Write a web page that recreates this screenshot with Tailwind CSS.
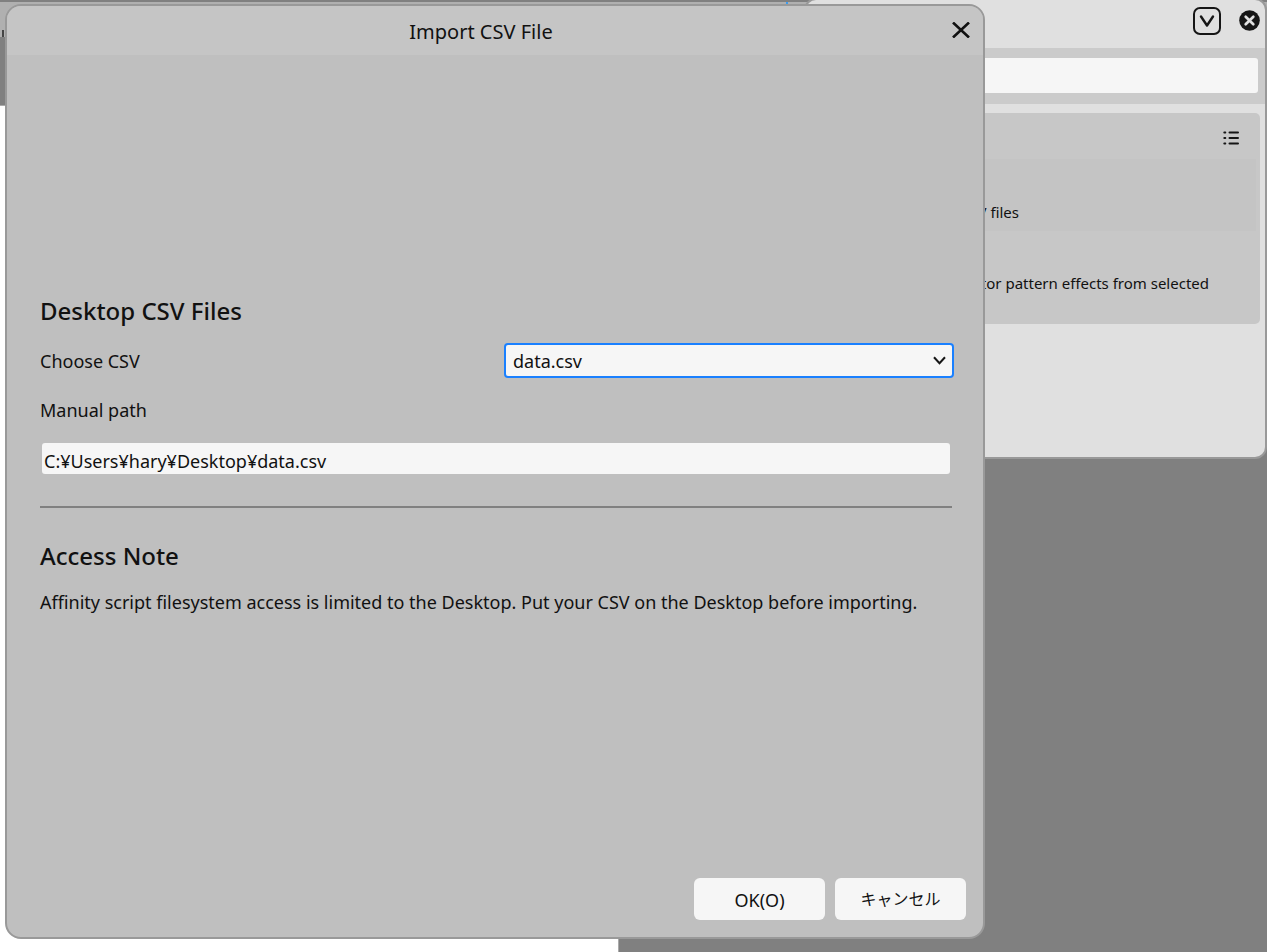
<!DOCTYPE html>
<html lang="en">
<head>
    <meta charset="UTF-8">
    <meta name="viewport" content="width=device-width, initial-scale=1.0">
    <title>Import CSV File</title>
    <script src="https://cdn.jsdelivr.net/npm/@tailwindcss/browser@4"></script>
</head>
<body class="relative h-screen overflow-hidden bg-[#808080] font-['Noto_Sans','Noto_Sans_CJK_JP',sans-serif] text-[#111]">

    <!-- App window behind the dialog -->
    <div class="flex h-full flex-col pt-[2px]">
        <div class="flex h-[35px] items-end bg-[#b0b0b0] pl-[2px]">
            <div class="h-[7px] w-[2px] bg-[#444]"></div>
        </div>
        <div class="h-[68px]"></div>
        <div class="w-[619px] flex-1 border-t border-r border-[#aaa] bg-white"></div>
    </div>
    <div class="absolute top-[2px] left-[786px] size-[2px] bg-[#3b9cf0]"></div>

    <!-- Scripts panel -->
    <aside class="absolute top-[-2px] right-0 left-[804px] flex h-[461px] flex-col rounded-xl border-2 border-[#999] bg-[#e0e0e0]">
        <div class="flex h-12 items-center justify-end gap-[18px] pr-[5px] pb-[7px]">
            <button type="button" aria-label="Collapse panel">
                <svg class="size-7" viewBox="0 0 28 28" fill="none" stroke="#161616" stroke-width="2">
                    <rect x="1" y="1" width="26" height="26" rx="6" />
                    <path d="M8 9.5l6 9 6-9" stroke-width="2.4" stroke-linecap="round" stroke-linejoin="round" />
                </svg>
            </button>
            <button type="button" aria-label="Close panel">
                <svg class="size-[21px]" viewBox="0 0 22 22">
                    <circle cx="11" cy="11" r="10.8" fill="#161616" />
                    <path d="M7 7l8 8M15 7l-8 8" stroke="#e0e0e0" stroke-width="2.8" stroke-linecap="round" />
                </svg>
            </button>
        </div>
        <div class="bg-[#cbcbcb] pt-[10px] pr-[7px] pb-[11px] pl-2">
            <input type="text" aria-label="Search scripts" class="block h-[35px] w-full rounded-[3px] bg-[#f6f6f6] px-2">
        </div>
        <div class="mt-[9px] mr-[5px] ml-2 rounded-[5px] bg-[#c7c7c7] pb-[22px] text-[15px] leading-5">
            <div class="flex h-[46px] items-center justify-end pt-1 pr-[21px]">
                <button type="button" aria-label="List view">
                    <svg class="h-[14px] w-4" viewBox="0 0 16 14" fill="none" stroke="#161616" stroke-width="2" stroke-linecap="round">
                        <path d="M1.3 1.5h1M6.5 1.5h8.5M1.3 7h1M6.5 7h8.5M1.3 12.5h1M6.5 12.5h8.5" />
                    </svg>
                </button>
            </div>
            <div class="mr-1 flex h-[72px] items-end justify-end bg-[#c4c4c4] pr-[237px] pb-[9px]">
                <p class="whitespace-nowrap">CSV files</p>
            </div>
            <div class="mr-1 flex h-[71px] items-end justify-end pr-[47px] pb-[9px]">
                <p class="whitespace-nowrap">vector pattern effects from selected</p>
            </div>
        </div>
    </aside>

    <!-- Import dialog -->
    <form role="dialog" aria-labelledby="dialogTitle" class="absolute top-1 right-[282px] bottom-[13px] left-[5px] flex flex-col overflow-hidden rounded-2xl border-2 border-[#999] bg-[#bfbfbf]">
        <header class="relative flex h-[49px] items-center justify-center bg-[#c5c5c5]">
            <h1 id="dialogTitle" class="pr-7 pt-[2px] text-[20px] leading-7">Import CSV File</h1>
            <button type="button" aria-label="Close" class="absolute top-4 right-[13px]">
                <svg class="h-4 w-[18px]" viewBox="0 0 18 16" fill="none" stroke="#111" stroke-width="2.6">
                    <path d="M1 .5l16 15M17 .5L1 15.5" />
                </svg>
            </button>
        </header>

        <div class="flex flex-1 flex-col justify-center pr-[29px] pb-[22px] pl-[33px] text-[18px] leading-7">
            <h2 class="text-[24px] leading-8 font-medium">Desktop CSV Files</h2>
            <div class="mt-4 flex items-center">
                <label for="csvSelect" class="flex-1">Choose CSV</label>
                <div class="relative w-[450px]">
                    <select id="csvSelect" class="block h-[35px] w-full appearance-none rounded-sm border-2 border-[#1a80ff] bg-[#f6f6f6] px-[7px] outline-none">
                        <option>data.csv</option>
                    </select>
                    <svg class="pointer-events-none absolute top-[13px] right-2 h-[9px] w-[13px]" viewBox="0 0 13 9" fill="none" stroke="#161616" stroke-width="2">
                        <path d="M1 1.2l5.5 6L12 1.2" />
                    </svg>
                </div>
            </div>
            <label for="csvPath" class="mt-[18px]">Manual path</label>
            <input id="csvPath" type="text" value="C:¥Users¥hary¥Desktop¥data.csv" class="mt-[19px] mr-1 ml-[2px] h-[31px] rounded-[3px] bg-[#f6f6f6] px-[2px] pt-1">
            <hr class="mt-8 mr-[2px] border-t-2 border-[#808080]">
            <h2 class="mt-8 text-[24px] leading-8 font-medium">Access Note</h2>
            <p class="mt-4 whitespace-nowrap">Affinity script filesystem access is limited to the Desktop. Put your CSV on the Desktop before importing.</p>
        </div>

        <footer class="flex justify-end gap-[10px] pr-[17px] pb-[17px] text-[18px]">
            <button type="submit" class="h-[42px] w-[131px] rounded-md bg-[#f6f6f6] pt-[2px]">OK(O)</button>
            <button type="button" lang="ja" class="h-[42px] w-[131px] rounded-md bg-[#f6f6f6] text-[16px]">キャンセル</button>
        </footer>
    </form>

</body>
</html>
